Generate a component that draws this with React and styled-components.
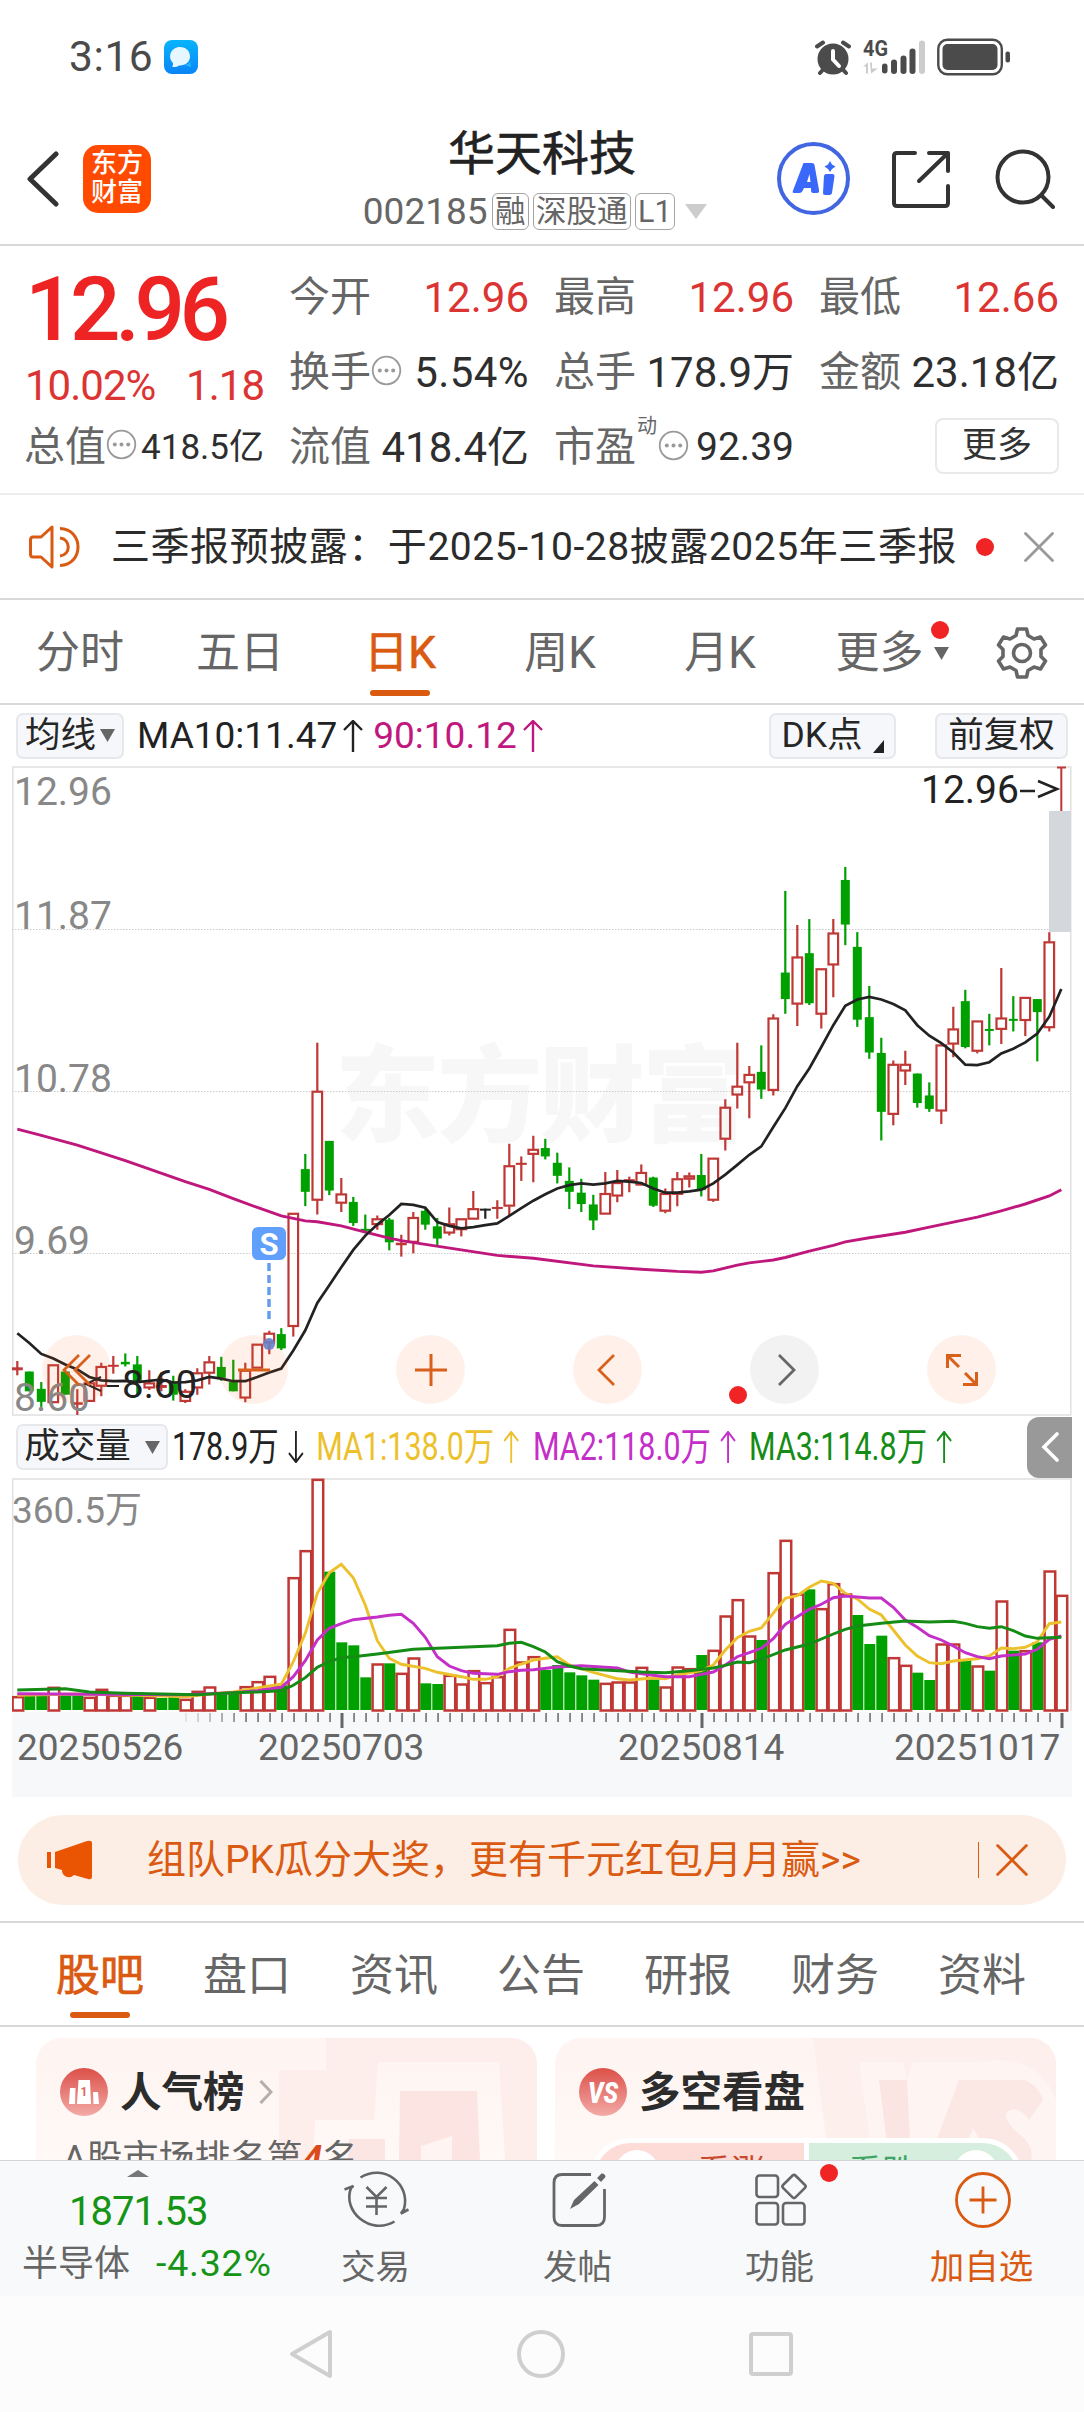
import React from "react";
import styled, { createGlobalStyle } from "styled-components";

const GlobalStyle = createGlobalStyle`
  * {
    box-sizing: border-box;
  }
  body {
    margin: 0;
    background: #fff;
    font-family: Roboto, "Noto Sans CJK SC", sans-serif;
    color: #2b2b2b;
  }
  svg {
    display: block;
    flex-shrink: 0;
  }
`;

const Page = styled.div`
  width: 1084px;
  height: 2412px;
  overflow: hidden;
  display: flex;
  flex-direction: column;
  line-height: 1;
  white-space: nowrap;
`;

/* status bar */
const StatusBar = styled.div`
  height: 113px;
  padding: 0 73px 0 69px;
  display: flex;
  align-items: center;
  justify-content: space-between;
`;
const StatusGroup = styled.div`
  display: flex;
  align-items: center;
  gap: ${(p) => p.$gap || 0}px;
`;
const Clock = styled.span`
  padding-top: 1px;
  font-size: 42.5px;
  letter-spacing: 0.6px;
  color: #4a4a4a;
`;

/* header */
const Header = styled.header`
  height: 133px;
  border-bottom: 2px solid #d9d9d9;
  display: grid;
  grid-template-columns: 340px 1fr 340px;
`;
const HeaderLeft = styled.div`
  display: flex;
  align-items: center;
  padding-left: 26px;
  gap: 24px;
`;
const AppLogo = styled.div`
  width: 68px;
  height: 68px;
  border-radius: 15px;
  background: #ff4a00;
  color: #fff;
  font-size: 26px;
  line-height: 29px;
  font-weight: 500;
  text-align: center;
  padding-top: 4px;
`;
const HeaderTitle = styled.div`
  display: flex;
  flex-direction: column;
  align-items: center;
  padding-top: 14px;
`;
const StockName = styled.h1`
  margin: 0;
  font-size: 47px;
  line-height: 54px;
  font-weight: 400;
  color: #222;
  -webkit-text-stroke: 0.6px #222;
`;
const StockCode = styled.div`
  margin-top: 11px;
  height: 38px;
  display: flex;
  align-items: center;
  gap: 4.5px;
  font-size: 37px;
  color: #666;
  padding-right: 10px;
`;
const Badge = styled.span`
  height: 37px;
  line-height: 35px;
  padding: 0 2px;
  font-size: ${(p) => p.$size || 30.5}px;
  border: 1.5px solid #a5a5a5;
  border-radius: 6px;
`;
const HeaderRight = styled.div`
  display: flex;
  align-items: center;
  justify-content: flex-end;
  padding-right: 29px;
  gap: 44px;
`;
const AiButton = styled.div`
  width: 73px;
  height: 73px;
  margin-right: -3px;
  border: 4px solid #4265e2;
  border-radius: 50%;
  display: flex;
  align-items: center;
  justify-content: center;
`;

/* quote */
const Quote = styled.section`
  height: 249px;
  border-bottom: 2px solid #ececec;
  padding: 0 25px 0 24px;
  display: grid;
  grid-template-columns: 240px 1fr;
  column-gap: 25px;
`;
const QuoteMain = styled.div`
  padding-top: 17px;
`;
const Price = styled.div`
  height: 92px;
  padding-left: 1px;
  line-height: 94px;
  font-size: 89px;
  font-weight: 500;
  letter-spacing: -5.5px;
  color: #ee2424;
`;
const Change = styled.div`
  height: 61px;
  padding-left: 1px;
  display: flex;
  align-items: center;
  justify-content: space-between;
  font-size: 42px;
  letter-spacing: -1px;
  color: #dc3333;
`;
const QuoteGrid = styled.div`
  padding-top: 14px;
  display: grid;
  grid-template-columns: repeat(3, 240px);
  grid-auto-rows: 75px;
  column-gap: 25px;
`;
const Cell = styled.div`
  display: flex;
  align-items: center;
  height: ${(p) => p.$h || 75}px;
  & > svg {
    margin-top: -5px;
  }
`;
const Label = styled.span`
  font-size: 41px;
  color: #666;
`;
const Value = styled.span`
  margin-left: auto;
  font-size: ${(p) => p.$size || 42}px;
  letter-spacing: ${(p) => p.$ls || 0}px;
  color: ${(p) => (p.$up ? "#dc3333" : "#2e2e2e")};
`;
const Sup = styled.sup`
  align-self: flex-start;
  margin: 6px 1px 0 1px;
  font-size: 20px;
  color: #666;
`;
const MoreButton = styled.button`
  margin: -4px 0 0 auto;
  width: 124px;
  height: 56px;
  padding: 0;
  border: 2px solid #e9e9e9;
  border-radius: 8px;
  background: #fff;
  font: 35px Roboto, "Noto Sans CJK SC", sans-serif;
  line-height: 49px;
  color: #333;
`;

/* notice */
const Notice = styled.div`
  height: 105px;
  border-bottom: 2px solid #d9d9d9;
  padding: 0 29px;
  display: flex;
  align-items: center;
`;
const NoticeText = styled.span`
  margin: 2px 18px 0 30px;
  width: 847px;
  font-size: 39px;
  letter-spacing: 0.55px;
`;
const CloseIcon = styled.div`
  margin-left: 30px;
`;
const Dot = styled.i`
  flex-shrink: 0;
  width: 18px;
  height: 18px;
  border-radius: 50%;
  background: #f02424;
`;

/* tabs */
const Tabs = styled.nav`
  height: ${(p) => p.$h}px;
  border-bottom: 2px solid #d9d9d9;
  padding: 0 ${(p) => p.$pad || 0}px;
  display: grid;
  grid-template-columns: ${(p) => p.$cols};
`;
const Tab = styled.div`
  position: relative;
  display: flex;
  align-items: center;
  justify-content: center;
  gap: 10px;
  padding: 3px 0 0 ${(p) => p.$pl || 0}px;
  font-size: 44px;
  color: ${(p) => (p.$active ? "#da5a12" : "#666")};
  -webkit-text-stroke: ${(p) => (p.$active ? "0.7px #da5a12" : "0")};
  &::after {
    content: "";
    display: ${(p) => (p.$active ? "block" : "none")};
    position: absolute;
    bottom: 7px;
    width: 60px;
    height: 6px;
    border-radius: 3px;
    background: #da5a12;
  }
`;
const TabDot = styled(Dot)`
  position: absolute;
  right: 11px;
  top: 21px;
`;

/* chart bars */
const ChartBar = styled.div`
  height: ${(p) => p.$h}px;
  padding: 0 16px;
  display: flex;
  align-items: center;
`;
const Chip = styled.div`
  height: 46px;
  width: ${(p) => p.$w}px;
  margin-left: ${(p) => p.$ml || 0}px;
  border: 2px solid #e6e8eb;
  border-radius: 7px;
  background: #f6f7fa;
  display: flex;
  align-items: center;
  justify-content: center;
  gap: ${(p) => p.$gap || 0}px;
  font-size: 35.5px;
  color: #262626;
`;
const Average = styled.span`
  display: flex;
  align-items: center;
  gap: ${(p) => p.$gap || 6}px;
  margin-left: ${(p) => p.$ml || 0}px;
  font-size: ${(p) => p.$size || 37}px;
  color: ${(p) => p.$color};
`;
const Spacer = styled.div`
  flex: 1;
`;
const ChartBox = styled.div`
  position: relative;
  margin: 0 12px;
  width: 1060px;
  height: ${(p) => p.$h}px;
`;
const ToolRow = styled.div`
  position: absolute;
  left: 30px;
  top: 569px;
  display: flex;
  gap: 108px;
`;
const Tool = styled.div`
  position: relative;
  width: 69px;
  height: 69px;
  border-radius: 50%;
  background: ${(p) => (p.$muted ? "rgba(0, 0, 0, 0.05)" : "rgba(250, 95, 20, 0.09)")};
  display: flex;
  align-items: center;
  justify-content: center;
  color: ${(p) => (p.$muted ? "#666" : "#d9601b")};
`;
const ToolDot = styled(Dot)`
  position: absolute;
  left: -21px;
  top: 51px;
`;
const Condensed = styled.div`
  width: 852px;
  height: 60px;
  flex-shrink: 0;
`;
const CondensedInner = styled.div`
  width: 1092px;
  height: 60px;
  transform: scaleX(0.78);
  transform-origin: left center;
  display: grid;
  grid-template-columns: 185px 278px 277px 1fr;
  padding-left: 5px;
`;
const Collapse = styled.div`
  width: 45px;
  height: 61px;
  margin-right: -4px;
  border-radius: 12px 0 0 12px;
  background: #999;
  display: flex;
  align-items: center;
  justify-content: center;
`;
const Axis = styled.div`
  margin: 0 12px;
  height: 85px;
  background: #f7f8fa;
`;
const AxisDates = styled.div`
  display: flex;
  padding: 0 10px 0 5px;
  font-size: 37px;
  line-height: 37px;
  color: #666;
`;
const AxisDate = styled.span`
  width: 166px;
  margin-left: ${(p) => p.$ml || 0}px;
`;

/* promo */
const PromoWrap = styled.div`
  height: 126px;
  padding: 18px 18px 0;
  border-bottom: 2px solid #d9d9d9;
`;
const Promo = styled.div`
  height: 90px;
  border-radius: 45px;
  background: #fceee5;
  color: #da5a12;
  padding: 0 38px 0 28px;
  display: flex;
  align-items: center;
  font-size: 39px;
`;
const PromoText = styled.span`
  flex: 1;
  margin-left: 54px;
`;
const Divider = styled.i`
  width: 1.5px;
  height: 36px;
  margin-right: 17px;
  background: #da5a12;
`;

/* cards */
const Cards = styled.div`
  height: 133px;
  overflow: hidden;
  padding: 11px 28px 0 36px;
  display: flex;
  gap: 18px;
`;
const Card = styled.div`
  position: relative;
  overflow: hidden;
  width: 501px;
  height: 260px;
  border-radius: 26px;
  background: linear-gradient(#fef4f1, #fffaf8 60%);
`;
const CardArt = styled.svg`
  position: absolute;
  right: 0;
  top: 0;
`;
const CardHead = styled.div`
  position: relative;
  display: flex;
  align-items: center;
  height: 48px;
  margin: 30px 0 0 24px;
  font-size: 41.5px;
  font-weight: 700;
  color: #2c2c2c;
`;
const CardTitle = styled.span`
  margin: 2px 14px 0 12px;
`;
const CardLine = styled.div`
  position: relative;
  margin: 24px 0 0 27px;
  font-size: 36px;
  line-height: 38px;
  color: #666;
`;
const Rank = styled.b`
  font-style: italic;
  color: #dc4a1c;
`;
const VoteBar = styled.div`
  position: relative;
  display: flex;
  gap: 5px;
  margin: 22px 0 0 35px;
  width: 433px;
  height: 80px;
  padding: 5px;
  border-radius: 40px;
  background: #fff;
`;
const Vote = styled.div`
  flex: 1;
  display: flex;
  justify-content: ${(p) => (p.$up ? "flex-end" : "flex-start")};
  padding: ${(p) => (p.$up ? "12px 39px 0 0" : "12px 0 0 39px")};
  border-radius: ${(p) => (p.$up ? "35px 0 0 35px" : "0 35px 35px 0")};
  background: ${(p) => (p.$up ? "#fddcd8" : "#d6eedd")};
  color: ${(p) => (p.$up ? "#c84a2c" : "#3fa465")};
  font-size: 34px;
  &::before {
    content: "";
    position: absolute;
    top: 12px;
    ${(p) => (p.$up ? "left: 25px" : "right: 25px")};
    width: 44px;
    height: 44px;
    border-radius: 50%;
    background: #fff;
  }
`;

/* bottom */
const BottomBar = styled.div`
  height: 136px;
  flex-shrink: 0;
  border-top: 1.5px solid #d3d4d8;
  background: #f7f9fb;
  display: grid;
  grid-template-columns: 276px repeat(4, 202px);
`;
const IndexBox = styled.div`
  display: flex;
  flex-direction: column;
  padding: 9px 0 0 22px;
`;
const IndexValue = styled.div`
  margin: 14px 0 0 47px;
  font-size: 40px;
  line-height: 42px;
  letter-spacing: -1px;
  color: #159415;
`;
const IndexLine = styled.div`
  margin-top: 11px;
  height: 40px;
  display: flex;
  align-items: center;
  gap: 26px;
  font-size: 36px;
  color: #666;
`;
const Down = styled.span`
  font-size: 37.5px;
  letter-spacing: 0.8px;
  color: #159415;
`;
const Action = styled.div`
  position: relative;
  display: flex;
  flex-direction: column;
  align-items: center;
  padding: 5px 1px 0 0;
  font-size: 34.5px;
  color: ${(p) => (p.$accent ? "#da5a12" : "#666")};
`;
const ActionLabel = styled.span`
  margin: 15px 2px 0 0;
  line-height: 36px;
`;
const ActionDot = styled(Dot)`
  position: absolute;
  left: 140px;
  top: 3px;
`;
const SystemBar = styled.div`
  height: 116px;
  background: #fcfcfc;
  padding: 0 291px 0 289px;
  display: flex;
  align-items: center;
  justify-content: space-between;
`;

const RED = "#bf3835";
const GREEN = "#00a000";

// high, body top, body bottom, low, rising (1) or falling (0)
const candles = [
  [1428, 1443, 1450, 1462, 1], [1453, 1453, 1500, 1500, 0], [1478, 1494, 1525, 1537, 0],
  [1437, 1437, 1527, 1527, 1], [1453, 1453, 1508, 1508, 0], [1495, 1526, 1532, 1556, 1],
  [1480, 1480, 1524, 1524, 1], [1432, 1441, 1488, 1512, 1], [1416, 1437, 1440, 1458, 1],
  [1410, 1430, 1436, 1441, 0], [1416, 1436, 1480, 1512, 0], [1450, 1480, 1492, 1497, 1],
  [1455, 1485, 1492, 1500, 1], [1463, 1480, 1508, 1522, 0], [1495, 1500, 1524, 1528, 1],
  [1445, 1456, 1492, 1508, 1], [1416, 1430, 1457, 1484, 1], [1418, 1442, 1468, 1475, 0],
  [1425, 1478, 1500, 1500, 0], [1432, 1450, 1516, 1526, 1], [1388, 1388, 1445, 1445, 1],
  [1356, 1362, 1385, 1412, 1], [1350, 1364, 1398, 1402, 0], [1077, 1077, 1346, 1370, 1],
  [936, 972, 1026, 1060, 0], [672, 787, 1046, 1080, 1], [905, 905, 1023, 1034, 0],
  [993, 1031, 1053, 1074, 1], [1038, 1050, 1100, 1107, 0], [1080, 1114, 1118, 1122, 0],
  [1082, 1090, 1104, 1116, 1], [1088, 1092, 1146, 1165, 0], [1128, 1147, 1153, 1180, 1],
  [1074, 1087, 1146, 1172, 1], [1066, 1071, 1104, 1116, 0], [1088, 1108, 1137, 1153, 0],
  [1063, 1102, 1124, 1130, 1], [1090, 1090, 1116, 1132, 1], [1024, 1066, 1091, 1091, 1],
  [1066, 1066, 1067, 1090, 2], [1046, 1062, 1065, 1090, 1], [912, 964, 1060, 1082, 1],
  [942, 957, 962, 1000, 1], [893, 925, 937, 1003, 1], [900, 922, 942, 949, 0],
  [933, 957, 988, 1006, 0], [968, 1000, 1026, 1067, 0], [995, 1028, 1055, 1074, 0],
  [1033, 1056, 1094, 1117, 0], [979, 1030, 1079, 1079, 1], [974, 1004, 1036, 1051, 1],
  [990, 996, 999, 1027, 1], [961, 980, 1010, 1010, 1], [990, 992, 1059, 1062, 0],
  [1018, 1030, 1072, 1077, 1], [979, 995, 1032, 1060, 1], [980, 988, 996, 1016, 1],
  [936, 986, 1022, 1037, 0], [946, 946, 1046, 1050, 1], [806, 825, 901, 928, 1],
  [672, 775, 796, 828, 1], [727, 747, 767, 851, 1], [678, 741, 783, 805, 0],
  [604, 613, 785, 797, 1], [311, 505, 568, 603, 0], [392, 468, 580, 632, 1],
  [378, 459, 578, 582, 0], [496, 496, 604, 638, 1], [378, 411, 487, 564, 1],
  [254, 285, 391, 440, 0], [409, 444, 617, 634, 0], [537, 611, 695, 710, 0],
  [660, 696, 836, 904, 0], [714, 723, 842, 868, 1], [691, 723, 739, 772, 1],
  [745, 745, 815, 826, 0], [766, 797, 829, 836, 0], [677, 677, 834, 865, 1],
  [586, 639, 675, 706, 1], [546, 573, 682, 685, 0], [620, 620, 692, 697, 1],
  [603, 639, 641, 678, 0], [494, 613, 640, 675, 1], [561, 615, 619, 645, 0],
  [564, 564, 619, 656, 1], [568, 568, 599, 716, 0], [409, 432, 636, 645, 1],
];

const ma10 = [
  1362, 1385, 1411, 1422, 1436, 1448, 1466, 1474, 1476, 1475, 1478, 1475, 1472, 1479, 1478,
  1474, 1466, 1470, 1476, 1476, 1466, 1455, 1446, 1403, 1355, 1290, 1248, 1205, 1164, 1130,
  1104, 1081, 1055, 1057, 1064, 1098, 1107, 1113, 1110, 1105, 1101, 1083, 1065, 1047, 1032,
  1018, 1010, 1006, 1009, 1006, 1000, 1002, 1005, 1018, 1028, 1028, 1025, 1021, 1006, 985,
  962, 938, 918, 872, 827, 775, 733, 682, 630, 584, 569, 563, 569, 580, 595, 630, 655, 673,
  695, 724, 725, 718, 697, 686, 671, 650, 610, 544,
].map((v, i) => [i, v]);

const ma90 = [
  [0, 877], [2, 892], [5, 915], [9, 952], [14, 1002], [16, 1020], [18, 1042], [20, 1063],
  [22, 1083], [24, 1095], [25, 1097], [27, 1107], [29, 1122], [31, 1136], [32, 1142],
  [34, 1151], [37, 1164], [40, 1177], [43, 1184], [48, 1202], [52, 1210], [55, 1215],
  [57, 1217], [58, 1214], [60, 1200], [61, 1195], [63, 1188], [64, 1182], [66, 1167],
  [68, 1153], [69, 1145], [71, 1135], [72, 1131], [74, 1122], [76, 1110], [78, 1098],
  [80, 1086], [82, 1071], [84, 1055], [86, 1036], [87, 1021],
];

const volumes = [
  860, 858, 858, 832, 856, 856, 862, 838, 856, 856, 848, 862, 864, 860, 868, 844, 831, 846,
  846, 830, 815, 799, 826, 503, 422, 208, 485, 697, 706, 802, 762, 760, 790, 744, 820, 822,
  796, 822, 782, 818, 800, 658, 756, 740, 780, 765, 787, 796, 809, 820, 816, 816, 772, 808,
  831, 771, 776, 735, 721, 618, 569, 678, 690, 488, 391, 552, 538, 596, 521, 552, 615, 702,
  677, 743, 766, 788, 810, 702, 702, 750, 768, 782, 573, 722, 722, 697, 483, 556,
];
const fallingDays = [
  1, 2, 4, 5, 10, 12, 13, 17, 18, 22, 26, 27, 28, 29, 31, 34, 35, 44, 45, 46, 47, 48, 53, 57,
  62, 66, 70, 71, 72, 75, 76, 79, 81, 83, 85,
];

const volMa1 = [
  [0, 856], [5, 852], [10, 856], [14, 860], [16, 852], [18, 846], [20, 834], [21, 828],
  [22, 823], [23, 755], [24, 670], [25, 550], [26, 488], [27, 463], [28, 503], [29, 585],
  [30, 692], [31, 745], [32, 763], [34, 775], [35, 787], [37, 800], [38, 808], [39, 808],
  [40, 800], [41, 775], [42, 762], [43, 750], [44, 745], [45, 740], [46, 765], [48, 787],
  [50, 806], [51, 810], [53, 804], [54, 806], [55, 795], [57, 782], [58, 765], [59, 720],
  [60, 683], [61, 664], [62, 654], [64, 565], [65, 557], [66, 532], [67, 513], [68, 520],
  [69, 550], [70, 567], [71, 597], [72, 615], [73, 660], [74, 705], [75, 738], [76, 758],
  [77, 761], [78, 753], [80, 746], [81, 738], [82, 714], [83, 716], [84, 712], [85, 695],
  [86, 641], [87, 636],
];
const volMa2 = [
  [0, 851], [6, 853], [14, 854], [18, 848], [20, 842], [22, 832], [23, 800], [24, 752],
  [25, 690], [26, 655], [27, 641], [28, 629], [30, 621], [31, 616], [32, 613], [33, 640],
  [34, 682], [35, 740], [36, 768], [37, 782], [38, 790], [40, 793], [41, 785], [42, 781],
  [43, 779], [45, 771], [47, 767], [49, 772], [50, 774], [51, 786], [53, 796], [54, 800],
  [56, 800], [57, 793], [58, 786], [59, 765], [60, 740], [61, 728], [62, 715], [63, 686],
  [64, 643], [65, 620], [66, 598], [67, 583], [68, 563], [69, 558], [71, 564], [72, 564],
  [73, 592], [74, 630], [75, 652], [76, 677], [77, 690], [78, 708], [79, 728], [80, 740],
  [81, 746], [82, 738], [84, 732], [85, 718], [86, 688], [87, 678],
];
const volMa3 = [
  [0, 840], [4, 836], [6, 846], [9, 850], [15, 854], [18, 848], [20, 846], [22, 842],
  [23, 826], [24, 803], [25, 772], [26, 755], [27, 743], [28, 740], [30, 732], [33, 718],
  [37, 712], [40, 707], [41, 700], [42, 697], [43, 710], [44, 726], [45, 755], [46, 768],
  [47, 776], [52, 786], [54, 788], [56, 782], [58, 774], [59, 766], [60, 756], [61, 758],
  [62, 748], [64, 720], [66, 702], [68, 672], [69, 658], [70, 648], [72, 640], [74, 633],
  [76, 636], [78, 634], [79, 640], [80, 650], [81, 655], [82, 650], [83, 662], [84, 678],
  [85, 685], [87, 682],
];

const px = (i) => 17.3 + i * 12;
const py = (v) => 760 + v / 2.376;
const vy = (v) => 1410 + v / 3;
const line = (points, y) => points.map(([i, v]) => `${px(i)},${y(v).toFixed(1)}`).join(" ");

const Candle = ({ i, data }) => {
  const [high, top, bottom, low, kind] = data;
  const x = px(i);
  const color = kind === 2 ? "#222" : kind ? RED : GREEN;
  if (!kind || bottom - top < 8) {
    return (
      <g fill={color}>
        <rect x={x - 1.1} y={py(high)} width={2.2} height={py(low) - py(high)} />
        <rect
          x={x - (kind ? 5.5 : 4.5)}
          y={py(top)}
          width={kind ? 11 : 9}
          height={Math.max(py(bottom) - py(top), 2)}
        />
      </g>
    );
  }
  return (
    <g stroke={color} strokeWidth={2.2} fill='none'>
      <path d={`M${x} ${py(high)}V${py(top)}M${x} ${py(bottom)}V${py(low)}`} />
      <rect x={x - 4.8} y={py(top) + 0.5} width={9.6} height={py(bottom) - py(top) - 1} />
    </g>
  );
};

const KChart = () => (
  <svg width='1060' height='650' viewBox='12 766 1060 650' fontSize='39' fill='#888'>
    <text
      x='335'
      y='1133'
      fontSize='105'
      fontWeight='900'
      fill='#f7f7f7'
      textLength='412'
      fontFamily='"Noto Sans CJK SC", sans-serif'
    >
      东方财富
    </text>
    <rect x='12.75' y='767' width='1058' height='648' fill='none' stroke='#e0e0e0' strokeWidth='1.5' />
    <path d='M12 929.5H1071M12 1091.5H1071M12 1253.5H1071' stroke='#ccc' strokeDasharray='1.5 1.5' />
    {candles.map((c, i) => (
      <Candle key={i} i={i} data={c} />
    ))}
    <path d='M1057 767.5H1066M1061.3 767V812' stroke={RED} strokeWidth='2' />
    <rect x='1049' y='811' width='22' height='121' fill='#d4d7dc' />
    <polyline points={line(ma90, py)} fill='none' stroke='#bf177c' strokeWidth='2.9' />
    <polyline points={line(ma10, py)} fill='none' stroke='#222' strokeWidth='2.7' />
    <path d='M269 1263V1320' stroke='#659ded' strokeWidth='3.5' strokeDasharray='8 4' />
    <circle cx='269' cy='1344' r='6' fill='#5b83d9' fillOpacity='.9' />
    <rect x='252' y='1227' width='34' height='33' rx='6' fill='#609ffb' />
    <text x='269' y='1254.500' fontSize='31' fontWeight='700' fill='#fff' textAnchor='middle'>
      S
    </text>
    <text x='14' y='804.500'>12.96</text>
    <text x='14' y='929'>11.87</text>
    <text x='14' y='1091.500'>10.78</text>
    <text x='14' y='1253.500'>9.69</text>
    <text x='14' y='1411'>8.60</text>
    <path d='M101 1377L86 1384L101 1391M107 1386H119' stroke='#222' strokeWidth='2' fill='none' />
    <text x='122' y='1397.500' fill='#222' fontSize='38.500'>8.60</text>
    <text x='921' y='803' fill='#222'>12.96</text>
    <path d='M1020 791H1035M1038 781L1057 789L1038 797' stroke='#222' strokeWidth='2.600' fill='none' />
  </svg>
);

const VolumeChart = () => (
  <svg width='1060' height='234' viewBox='12 1478 1060 234'>
    <path d='M12.7 1711V1479H1071V1711' fill='none' stroke='#e0e0e0' strokeWidth='1.5' />
    {volumes.map((v, i) =>
      fallingDays.includes(i) ? (
        <rect key={i} x={px(i) - 5} y={vy(v)} width={11} height={1710 - vy(v)} fill={GREEN} />
      ) : (
        <rect
          key={i}
          x={px(i) - 4.7}
          y={vy(v) + 0.5}
          width={10.6}
          height={1710 - vy(v)}
          fill='#fff'
          stroke={RED}
          strokeWidth={2.5}
        />
      )
    )}
    <g fill='none' strokeWidth='2.9'>
      <polyline points={line(volMa1, vy)} stroke='#ecc12c' />
      <polyline points={line(volMa2, vy)} stroke='#c42fc8' />
      <polyline points={line(volMa3, vy)} stroke='#158c15' />
    </g>
    <text x='12' y='1523' fontSize='37' fill='#888'>
      360.5万
    </text>
  </svg>
);

const AxisTicks = () => (
  <svg width='1060' height='17' viewBox='12 0 1060 17'>
    {Array.from({ length: 77 }, (_, k) => k + 11).map((i) => {
      const major = [27, 57, 87].includes(i);
      return (
        <rect
          key={i}
          x={px(i) - (major ? 0.8 : 0)}
          y={1}
          width={major ? 3 : 1.5}
          height={major ? 15 : 9}
          fill='#666'
          opacity={Math.min(1, Math.max(0, (i - 13) / 6))}
        />
      );
    })}
  </svg>
);

const Arrow = ({ down }) => (
  <svg width='20' height='32' viewBox='0 0 20 32' fill='none' stroke='currentColor' strokeWidth='2.4'>
    <path d={down ? "M10 0V31M1 22L10 31L19 22" : "M10 32V1M1 10L10 1L19 10"} />
  </svg>
);

const Triangle = ({ w = 15, h = 13, color = "#666" }) => (
  <svg width={w} height={h} viewBox='0 0 10 10' preserveAspectRatio='none'>
    <path d='M0 0H10L5 10Z' fill={color} />
  </svg>
);

const Info = () => (
  <svg width='31' height='31' viewBox='0 0 31 31' fill='#999'>
    <circle cx='15.500' cy='15.500' r='13.800' fill='none' stroke='#999' strokeWidth='1.800' />
    <circle cx='8.800' cy='15.500' r='2' />
    <circle cx='15.500' cy='15.500' r='2' />
    <circle cx='22.200' cy='15.500' r='2' />
  </svg>
);

const Cross = ({ size, color, w }) => (
  <svg width={size} height={size} viewBox='0 0 30 30' stroke={color} strokeWidth={w} strokeLinecap='round'>
    <path d='M1.500 1.500L28.500 28.500M28.500 1.500L1.500 28.500' />
  </svg>
);

const Status = () => (
  <StatusBar>
    <StatusGroup $gap={11}>
      <Clock>3:16</Clock>
      <svg width='34' height='34' viewBox='0 0 34 34'>
        <defs>
          <linearGradient id='msg' x1='0' y1='0' x2='0' y2='1'>
            <stop offset='0' stopColor='#08b4fd' />
            <stop offset='1' stopColor='#0a84f6' />
          </linearGradient>
        </defs>
        <rect width='34' height='34' rx='8' fill='url(#msg)' />
        <path d='M20 25Q28 24 26 18L27 27Z' fill='#20b9ff' />
        <path d='M16 7C22 7 26 11 26 16.500C26 22 21 26 15 25.500Q12 28 8 26.500Q9.500 25 9 23C3 17 7 7 16 7Z' fill='#e6f7ff' />
      </svg>
    </StatusGroup>
    <svg width='196' height='38' viewBox='815 36.500 196 38' fill='#4b4b4b'>
      <circle cx='833' cy='57.500' r='15.500' />
      <path d='M817 45L823 41M849 45L843 41M824 67L820 71.500M842 67L846 71.500' stroke='#4b4b4b' strokeWidth='4' strokeLinecap='round' />
      <path d='M833 49.500V58L839 64.500' fill='none' stroke='#fff' strokeWidth='4' strokeLinecap='round' />
      <text x='863' y='54.500' fontSize='22' fontWeight='700' textLength='25' lengthAdjust='spacingAndGlyphs'>4G</text>
      <path d='M863 65L868 61V72H866V65ZM870 61H872V67L878 67L871 72Z' fill='#ccc' />
      <rect x='882' y='62' width='5.500' height='10' rx='2.700' />
      <rect x='891' y='58' width='6' height='14.500' rx='3' />
      <rect x='900.500' y='54' width='6' height='18.500' rx='3' />
      <rect x='909.500' y='47' width='6' height='25.500' rx='3' />
      <rect x='919' y='39' width='6' height='33.500' rx='3' fill='#ccc' />
      <rect x='938.300' y='38.300' width='63.500' height='34.500' rx='9' fill='none' stroke='#4b4b4b' strokeWidth='2.400' />
      <rect x='942.500' y='42.500' width='55' height='26' rx='5' />
      <rect x='1005.500' y='50' width='4.500' height='11' rx='2' />
    </svg>
  </StatusBar>
);

const App = () => {
  return (
    <Page>
      <GlobalStyle />
      <Status />

      <Header>
        <HeaderLeft>
          <svg width='33' height='56' viewBox='0 0 33 56' fill='none' stroke='#333' strokeWidth='5' strokeLinecap='round' strokeLinejoin='round'>
            <path d='M30 3L4 28L30 53' />
          </svg>
          <AppLogo>
            东方
            <br />
            财富
          </AppLogo>
        </HeaderLeft>
        <HeaderTitle>
          <StockName>华天科技</StockName>
          <StockCode>
            002185
            <Badge>融</Badge>
            <Badge>深股通</Badge>
            <Badge>L1</Badge>
            <svg width='32' height='15' viewBox='-6 0 32 15'>
              <path d='M0 0H22L11 15Z' fill='#ccc' />
            </svg>
          </StockCode>
        </HeaderTitle>
        <HeaderRight>
          <AiButton>
            <svg width='44' height='36' viewBox='0 0 44 36' fill='#3a68fb'>
              <path
                d='M11.500 2H20Q22 2 22.500 4L27 29Q27.500 32 25 32H21Q19 32 19 29V27H12L10.500 30Q9.500 32 7.500 32H2Q0 32 1 29.500ZM15 21H18.500L17.500 13Z'
                fillRule='evenodd'
              />
              <path d='M34 13H40.500Q42.500 13 42.500 15L40 32Q39.500 34 37.500 34H33Q31 34 31 32L32 15Q32.500 13 34 13Z' />
              <path d='M38 0L40 3.500L43.500 5.500L40 8L38 11L36 8L32.500 5.500L36 3.500Z' />
            </svg>
          </AiButton>
          <svg width='60' height='60' viewBox='0 0 60 60' fill='none' stroke='#333' strokeWidth='4' strokeLinecap='round' strokeLinejoin='round'>
            <path d='M24 4H6Q3 4 3 7V54Q3 57 6 57H54Q57 57 57 54V37M38 4H57V22M57 4L28 32' />
          </svg>
          <svg width='60' height='60' viewBox='0 0 60 60' fill='none' stroke='#333' strokeWidth='4' strokeLinecap='round'>
            <circle cx='28' cy='28' r='25.500' />
            <path d='M47 47L58 58' />
          </svg>
        </HeaderRight>
      </Header>

      <Quote>
        <QuoteMain>
          <Price>12.96</Price>
          <Change>
            <span>10.02%</span>
            <span>1.18</span>
          </Change>
          <Cell $h={62}>
            <Label>总值</Label>
            <Info />
            <Value $size={35}>418.5亿</Value>
          </Cell>
        </QuoteMain>
        <QuoteGrid>
          <Cell>
            <Label>今开</Label>
            <Value $up>12.96</Value>
          </Cell>
          <Cell>
            <Label>最高</Label>
            <Value $up>12.96</Value>
          </Cell>
          <Cell>
            <Label>最低</Label>
            <Value $up>12.66</Value>
          </Cell>
          <Cell>
            <Label>换手</Label>
            <Info />
            <Value $ls={0.4}>5.54%</Value>
          </Cell>
          <Cell>
            <Label>总手</Label>
            <Value>178.9万</Value>
          </Cell>
          <Cell>
            <Label>金额</Label>
            <Value>23.18亿</Value>
          </Cell>
          <Cell>
            <Label>流值</Label>
            <Value>418.4亿</Value>
          </Cell>
          <Cell>
            <Label>市盈</Label>
            <Sup>动</Sup>
            <Info />
            <Value $size={39}>92.39</Value>
          </Cell>
          <Cell>
            <MoreButton>更多</MoreButton>
          </Cell>
        </QuoteGrid>
      </Quote>

      <Notice>
        <svg width='52' height='44' viewBox='0 0 52 44' fill='none' stroke='#da5a12' strokeWidth='3' strokeLinejoin='round'>
          <path d='M23 2V42L12 32H4Q1.500 32 1.500 29V15Q1.500 12 4 12H12Z' />
          <path d='M31 3.500C55 4 55 40 31 40.500M31 13C42 14 42 30 31 31' />
        </svg>
        <NoticeText>三季报预披露：于2025-10-28披露2025年三季报</NoticeText>
        <Dot />
        <CloseIcon>
          <Cross size={30} color='#999' w={2.8} />
        </CloseIcon>
      </Notice>

      <Tabs $h={105} $cols='repeat(6, 160px) 124px'>
        <Tab>分时</Tab>
        <Tab>五日</Tab>
        <Tab $active>日K</Tab>
        <Tab>周K</Tab>
        <Tab>月K</Tab>
        <Tab $pl={24}>
          更多
          <TabDot />
          <Triangle />
        </Tab>
        <Tab>
          <svg width='52' height='52' viewBox='0 0 52 52' fill='none' stroke='#666' strokeWidth='3.600' strokeLinejoin='round'>
            <path d='M21.500 2H30.500L32 8.500L38 12L44.500 10L49.500 18L45 22.500V29.500L49.500 34L44.500 42L38 40L32 43.500L30.500 50H21.500L20 43.500L14 40L7.500 42L2.500 34L7 29.500V22.500L2.500 18L7.500 10L14 12L20 8.500Z' />
            <circle cx='26' cy='26' r='8.500' />
          </svg>
        </Tab>
      </Tabs>

      <ChartBar $h={61}>
        <Chip $w={108} $gap={4}>
          均线
          <Triangle />
        </Chip>
        <Average $ml={13} $color='#222'>
          MA10:11.47
          <Arrow />
        </Average>
        <Average $ml={10} $color='#c0187e'>
          90:10.12
          <Arrow />
        </Average>
        <Spacer />
        <Chip $w={127} $gap={10}>
          DK点
          <svg width='11' height='34' viewBox='0 0 11 34'>
            <path d='M11 21V34H0Z' fill='#222' />
          </svg>
        </Chip>
        <Chip $w={133} $ml={39}>
          前复权
        </Chip>
      </ChartBar>

      <ChartBox $h={650}>
        <KChart />
        <ToolRow>
          <Tool>
            <svg width='30' height='34' viewBox='0 0 30 34' fill='none' stroke='currentColor' strokeWidth='2.800'>
              <path d='M17 2L2 17L17 32M28 2L13 17L28 32' />
            </svg>
          </Tool>
          <Tool>
            <svg width='34' height='34' viewBox='0 0 34 34' stroke='currentColor' strokeWidth='3'>
              <path d='M1 17H33' />
            </svg>
          </Tool>
          <Tool>
            <svg width='34' height='34' viewBox='0 0 34 34' stroke='currentColor' strokeWidth='3'>
              <path d='M1 17H33M17 1V33' />
            </svg>
          </Tool>
          <Tool>
            <svg width='22' height='34' viewBox='0 0 22 34' fill='none' stroke='currentColor' strokeWidth='2.800'>
              <path d='M17 2L2 17L17 32' />
            </svg>
          </Tool>
          <Tool $muted>
            <ToolDot />
            <svg width='14' height='34' viewBox='0 0 14 34' fill='none' stroke='currentColor' strokeWidth='2.800' overflow='visible'>
              <path d='M1 2L16 17L1 32' />
            </svg>
          </Tool>
          <Tool>
            <svg width='34' height='34' viewBox='0 0 34 34' fill='none' stroke='currentColor' strokeWidth='3'>
              <path d='M2.500 15V2.500H16M3 3L14 14M31.500 19V31.500H18M31 31L20 20' />
            </svg>
          </Tool>
        </ToolRow>
      </ChartBox>

      <ChartBar $h={62}>
        <Chip $w={152} $gap={14}>
          成交量
          <Triangle />
        </Chip>
        <Condensed>
          <CondensedInner>
            <Average $size={39} $gap={12} $color='#222'>
              178.9万
              <Arrow down />
            </Average>
            <Average $size={39} $gap={12} $color='#ecc12c'>
              MA1:138.0万
              <Arrow />
            </Average>
            <Average $size={39} $gap={12} $color='#c42fc8'>
              MA2:118.0万
              <Arrow />
            </Average>
            <Average $size={39} $gap={12} $color='#158c15'>
              MA3:114.8万
              <Arrow />
            </Average>
          </CondensedInner>
        </Condensed>
        <Spacer />
        <Collapse>
          <svg width='18' height='30' viewBox='0 0 18 30' fill='none' stroke='#fff' strokeWidth='3.600' strokeLinecap='round'>
            <path d='M16 2L3 15L16 28' />
          </svg>
        </Collapse>
      </ChartBar>

      <ChartBox $h={234}>
        <VolumeChart />
      </ChartBox>
      <Axis>
        <AxisTicks />
        <AxisDates>
          <AxisDate>20250526</AxisDate>
          <AxisDate $ml={75}>20250703</AxisDate>
          <AxisDate $ml={194}>20250814</AxisDate>
          <AxisDate $ml={110}>20251017</AxisDate>
        </AxisDates>
      </Axis>

      <PromoWrap>
        <Promo>
          <svg width='47' height='40' viewBox='0 0 47 40' fill='#ea5504'>
            <path d='M1 12H5V28H1ZM9 12L41 1Q46 0 46 3V37Q46 40 42 39L28 35Q24 39 19 36Q16 34 16 30L9 28Z' />
          </svg>
          <PromoText>组队PK瓜分大奖，更有千元红包月月赢&gt;&gt;</PromoText>
          <Divider />
          <Cross size={32} color='#da5a12' w={2.6} />
        </Promo>
      </PromoWrap>

      <Tabs $h={104} $pad={26.5} $cols='repeat(7, 147px)'>
        <Tab $active>股吧</Tab>
        <Tab>盘口</Tab>
        <Tab>资讯</Tab>
        <Tab>公告</Tab>
        <Tab>研报</Tab>
        <Tab>财务</Tab>
        <Tab>资料</Tab>
      </Tabs>

      <Cards>
        <Card>
          <CardArt width='260' height='122' viewBox='0 0 260 122'>
            <path d='M2 32H49V0H260V122H228L222 24H101L97 82H38L36 122H2Z' fill='#fdeeeb' />
            <path d='M123 53H200L203 122H122Z' fill='#fbe4e2' />
            <path d='M72 101H108V122H71Z' fill='#fbe6e4' />
            <path d='M144 108L175 98V122H144Z' fill='#fef4f2' />
          </CardArt>
          <CardHead>
            <svg width='48' height='48' viewBox='0 0 48 48'>
              <defs>
                <linearGradient id='badge' x1='0' y1='0' x2='0' y2='1'>
                  <stop offset='0' stopColor='#dc5049' />
                  <stop offset='1' stopColor='#f3aaa6' />
                </linearGradient>
              </defs>
              <circle cx='24' cy='24' r='24' fill='url(#badge)' />
              <path d='M10 20H15.500L15 36H9ZM18.500 12H30L31 36H17ZM33 24H38L39 36H33.500Z' fill='#fff' />
              <text x='24' y='28' fontSize='12' fontWeight='700' fill='#dc6660' textAnchor='middle'>1</text>
            </svg>
            <CardTitle>人气榜</CardTitle>
            <svg width='14' height='24' viewBox='0 0 14 24' fill='none' stroke='#b5aeac' strokeWidth='3'>
              <path d='M1.500 1L12 12L1.500 23' />
            </svg>
          </CardHead>
          <CardLine>
            A股市场排名第<Rank>4</Rank>名
          </CardLine>
        </Card>
        <Card>
          <CardArt width='243' height='122' viewBox='0 0 243 122'>
            <path d='M0 0H243V122H16Z' fill='#fdefec' />
            <path d='M46 24H90L94 42L100 24H165Q225 14 243 62V122H60Z' fill='#fef5f2' />
            <path d='M66 42H94L98 122H76Z' fill='#fbe5e3' />
            <path d='M116 122L146 42H212Q226 48 230 62L216 82Q204 66 194 74Q190 82 206 96Q222 108 218 122H178L160 90L148 122Z' fill='#fbe8e5' />
          </CardArt>
          <CardHead>
            <svg width='48' height='48' viewBox='0 0 48 48'>
              <circle cx='24' cy='24' r='24' fill='url(#badge)' />
              <text x='24' y='34.500' fontSize='29' fontWeight='900' fontStyle='italic' fill='#fff' textAnchor='middle' textLength='30' lengthAdjust='spacingAndGlyphs'>
                VS
              </text>
            </svg>
            <CardTitle>多空看盘</CardTitle>
          </CardHead>
          <VoteBar>
            <Vote $up>看涨</Vote>
            <Vote>看跌</Vote>
          </VoteBar>
        </Card>
      </Cards>

      <BottomBar>
        <IndexBox>
          <svg width='232' height='7' viewBox='0 0 232 7'>
            <path d='M116 0L127 7H105Z' fill='#777' />
          </svg>
          <IndexValue>1871.53</IndexValue>
          <IndexLine>
            半导体
            <Down>-4.32%</Down>
          </IndexLine>
        </IndexBox>
        <Action>
          <svg width='68' height='68' viewBox='343 2166 68 68' fill='none' stroke='#666' strokeWidth='2.600'>
            <path d='M360.500 2177.500C384 2163 411 2184 404 2209L401 2213.500L408.500 2209.500' />
            <path d='M394.500 2221.500C370 2236 342 2211 351 2188L353.500 2186L344.500 2189.500' />
            <path d='M366.500 2187L376.500 2197L386.500 2187M366 2198H387M366 2206.500H387M376.500 2197V2215' />
          </svg>
          <ActionLabel>交易</ActionLabel>
        </Action>
        <Action>
          <svg width='68' height='68' viewBox='545 2166 68 68' fill='none' stroke='#666' strokeWidth='2.800'>
            <path d='M591 2174.500H562Q554 2174.500 554 2183V2217Q554 2225.500 562 2225.500H596Q604.500 2225.500 604.500 2217V2189' />
            <path d='M594.500 2181L598.500 2185L579 2204L570 2209L574 2200Z M597 2178L601.500 2173.500Q605 2173 605.500 2177L601 2182Z' fill='#666' stroke='none' />
          </svg>
          <ActionLabel>发帖</ActionLabel>
        </Action>
        <Action>
          <ActionDot />
          <svg width='68' height='68' viewBox='747.500 2166 68 68' fill='none' stroke='#666' strokeWidth='2.600' strokeLinejoin='round'>
            <rect x='757' y='2175.500' width='21.500' height='21.500' rx='3' />
            <rect x='757' y='2203' width='21.500' height='21.500' rx='3' />
            <rect x='783.500' y='2203' width='21.500' height='21.500' rx='3' />
            <rect x='785.700' y='2177.700' width='17.500' height='17.500' rx='2' transform='rotate(45 794.500 2186.500)' />
          </svg>
          <ActionLabel>功能</ActionLabel>
        </Action>
        <Action $accent>
          <svg width='68' height='68' viewBox='0 0 68 68' fill='none' stroke='currentColor' strokeWidth='2.800'>
            <circle cx='34' cy='34' r='26.500' />
            <path d='M20.500 34H47.500M34 20.500V47.500' />
          </svg>
          <ActionLabel>加自选</ActionLabel>
        </Action>
      </BottomBar>

      <SystemBar>
        <svg width='44' height='50' viewBox='0 0 44 50' fill='none' stroke='#cfcfcf' strokeWidth='4' strokeLinejoin='round'>
          <path d='M41 3V47L3 25Z' />
        </svg>
        <svg width='48' height='48' viewBox='0 0 48 48' fill='none' stroke='#cfcfcf' strokeWidth='4'>
          <circle cx='24' cy='24' r='22' />
        </svg>
        <svg width='44' height='44' viewBox='0 0 44 44' fill='none' stroke='#cfcfcf' strokeWidth='4'>
          <rect x='2' y='2' width='40' height='40' rx='2' />
        </svg>
      </SystemBar>
    </Page>
  );
};

export default App;
